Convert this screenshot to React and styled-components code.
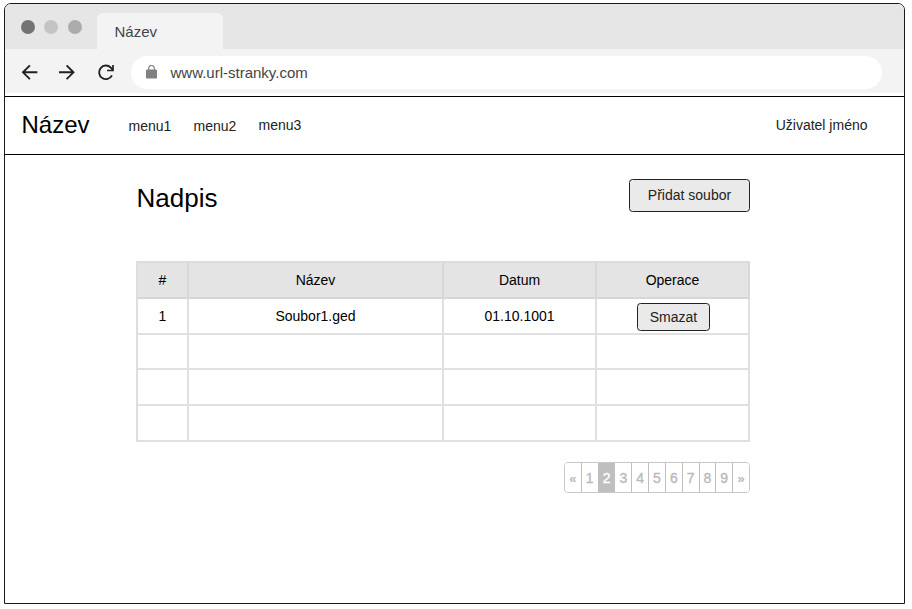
import React from "react";
import styled, { createGlobalStyle } from "styled-components";

const Global = createGlobalStyle`
  * { box-sizing: border-box; }
  body { margin: 0; background: #fff; font-family: "Liberation Sans", Arial, sans-serif; font-size: 14px; color: #222; }
`;
const Page = styled.div`
  width: 912px;
  height: 609px;
  padding: 3px 7px 5px 4px;
`;
const Window = styled.div`
  height: 601px;
  border: 1px solid #1a1a1a;
  border-radius: 7px 7px 0 0;
  overflow: hidden;
  display: flex;
  flex-direction: column;
`;
const TabBar = styled.div`
  height: 45px;
  background: #e6e6e6;
  display: flex;
  align-items: flex-start;
  padding: 16px 0 0 15.5px;
`;
const Dot = styled.span`
  width: 14px;
  height: 14px;
  border-radius: 50%;
  margin-right: 9.7px;
  background: ${(p) => p.$tone};
`;
const Tab = styled.div`
  width: 126px;
  height: 36px;
  margin: -7px 0 0 5.4px;
  padding: 10px 0 0 17.5px;
  line-height: 18px;
  font-size: 15px;
  color: #444;
  background: #f3f3f3;
  border-radius: 6px 6px 0 0;
`;
const Toolbar = styled.div`
  height: 44px;
  background: #f3f3f3;
  display: flex;
  align-items: center;
  padding: 2px 22px 0 16px;
`;
const NavIcon = styled.svg`
  width: 18px;
  height: 18px;
  margin-right: ${(p) => p.$gap}px;
  fill: none;
  stroke: #222;
  stroke-width: 1.9;
`;
const Address = styled.div`
  flex: 1;
  height: 33px;
  border-radius: 17px;
  background: #fff;
  display: flex;
  align-items: center;
  padding-left: 15px;
  color: #444;
  font-size: 15px;
`;
const Lock = styled.svg`
  width: 11px;
  height: 14px;
  margin-right: 13.5px;
`;
const Nav = styled.nav`
  height: 59px;
  margin-top: 3px;
  border-top: 1px solid #000;
  border-bottom: 1px solid #000;
  display: flex;
  align-items: center;
  padding: 0 36.5px 0 16.5px;
`;
const Brand = styled.div`
  width: 107px;
  font-size: 24px;
  line-height: 28px;
  color: #000;
  padding-bottom: 1px;
`;
const MenuItem = styled.a`
  width: 65px;
  font-size: 14px;
  line-height: 16px;
  padding-bottom: ${(p) => (p.$raised ? 1 : 0)}px;
  margin-top: ${(p) => (p.$raised ? 0 : 1)}px;
`;
const User = styled.div`
  margin-left: auto;
  padding-bottom: 1px;
  font-size: 14px;
  line-height: 16px;
`;
const Content = styled.main`
  width: 614px;
  margin-left: 131px;
  padding-top: 24px;
  display: flex;
  flex-direction: column;
`;
const Heading = styled.header`
  height: 82px;
  display: flex;
  justify-content: space-between;
  align-items: flex-start;
`;
const Title = styled.h1`
  margin: 3px 0 0 0.5px;
  font-size: 26px;
  line-height: 32px;
  font-weight: 400;
  color: #000;
`;
const Button = styled.button`
  font: 14px "Liberation Sans", Arial, sans-serif;
  color: #222;
  background: #eaeaea;
  border: 1px solid #222;
  border-radius: 3.5px;
  padding: 0 0 1px;
  width: ${(p) => (p.$small ? 73 : 121)}px;
  height: ${(p) => (p.$small ? 28 : 33)}px;
  margin: ${(p) => (p.$small ? "2px 0 0 2px" : 0)};
`;
const Table = styled.div`
  border-left: 2px solid #dedede;
  border-top: 2px solid #dcdcdc;
`;
const Row = styled.div`
  display: grid;
  grid-template-columns: 51px 255px 153px 153px;
  height: ${(p) => p.$height}px;
  background: ${(p) => (p.$head ? "#e4e4e4" : "#fff")};
`;
const Cell = styled.div`
  border-right: 2px solid rgba(0, 0, 0, ${(p) => (p.$head ? 0.05 : 0.12)});
  border-bottom: 2px solid ${(p) => (p.$head ? "#d6d6d6" : "rgba(0, 0, 0, 0.12)")};
  display: flex;
  align-items: center;
  justify-content: center;
  font-size: 14px;
  color: #000;
`;
const Pager = styled.div`
  display: flex;
  align-self: flex-end;
  width: 186px;
  height: 31px;
  margin-top: 20px;
  border: 1px solid #c8c8c8;
  border-radius: 4px;
  overflow: hidden;
`;
const PageLink = styled.a`
  flex: 1;
  display: flex;
  align-items: center;
  justify-content: center;
  padding-top: ${(p) => (p.$arrow ? 2 : 1)}px;
  font-size: ${(p) => (p.$arrow ? 13 : 14)}px;
  font-weight: ${(p) => (p.$arrow ? 700 : 400)};
  color: ${(p) => (p.$active ? "#fff" : "#b8b8b8")};
  -webkit-text-stroke: ${(p) => (p.$arrow ? 0 : 0.3)}px;
  background: ${(p) => (p.$active ? "#bfbfbf" : "#fff")};
  & + & { border-left: 1.5px solid ${(p) => (p.$active ? "#bfbfbf" : "#c8c8c8")}; }
`;

const rows = [
  { height: 36, cells: ["1", "Soubor1.ged", "01.10.1001"], action: "Smazat" },
  { height: 35, cells: ["", "", ""] },
  { height: 36, cells: ["", "", ""] },
  { height: 36, cells: ["", "", ""] },
];
const pages = ["«", "1", "2", "3", "4", "5", "6", "7", "8", "9", "»"];

export default function App() {
  return (
    <Page>
      <Global />
      <Window>
        <TabBar>
          <Dot $tone="#737373" />
          <Dot $tone="#c4c4c4" />
          <Dot $tone="#acacac" />
          <Tab>Název</Tab>
        </TabBar>
        <Toolbar>
          <NavIcon $gap={19} viewBox="0 0 18 18"><path d="M16.4 9.3H2M8.9 2.4L2 9.3l6.9 6.9" /></NavIcon>
          <NavIcon $gap={21} viewBox="0 0 18 18"><path d="M1 9.3H15.4M8.6 2.4L15.5 9.3l-6.9 6.9" /></NavIcon>
          <NavIcon $gap={16} viewBox="0 0 18 18">
            <path d="M15 12.4A6.8 6.8 0 1 1 13.8 4.6L15.8 6.8" />
            <path d="M16 1.9V7.5H10" strokeWidth="1.7" />
          </NavIcon>
          <Address>
            <Lock viewBox="0 0 11 14">
              <path d="M2.7 6V3.3a2.8 2.8 0 0 1 5.6 0V6" fill="none" stroke="#808080" strokeWidth="1.2" />
              <rect y="4.4" width="11" height="9.2" rx="1.2" fill="#808080" />
            </Lock>
            www.url-stranky.com
          </Address>
        </Toolbar>
        <Nav>
          <Brand>Název</Brand>
          <MenuItem>menu1</MenuItem>
          <MenuItem>menu2</MenuItem>
          <MenuItem $raised>menu3</MenuItem>
          <User>Uživatel jméno</User>
        </Nav>
        <Content>
          <Heading>
            <Title>Nadpis</Title>
            <Button>Přidat soubor</Button>
          </Heading>
          <Table>
            <Row $head $height={36}>
              {["#", "Název", "Datum", "Operace"].map((label) => <Cell $head key={label}>{label}</Cell>)}
            </Row>
            {rows.map((row, i) => (
              <Row key={i} $height={row.height}>
                {row.cells.map((text, j) => <Cell key={j}>{text}</Cell>)}
                <Cell>{row.action && <Button $small>{row.action}</Button>}</Cell>
              </Row>
            ))}
          </Table>
          <Pager>
            {pages.map((p) => (
              <PageLink key={p} $active={p === "2"} $arrow={p === "«" || p === "»"}>{p}</PageLink>
            ))}
          </Pager>
        </Content>
      </Window>
    </Page>
  );
}
